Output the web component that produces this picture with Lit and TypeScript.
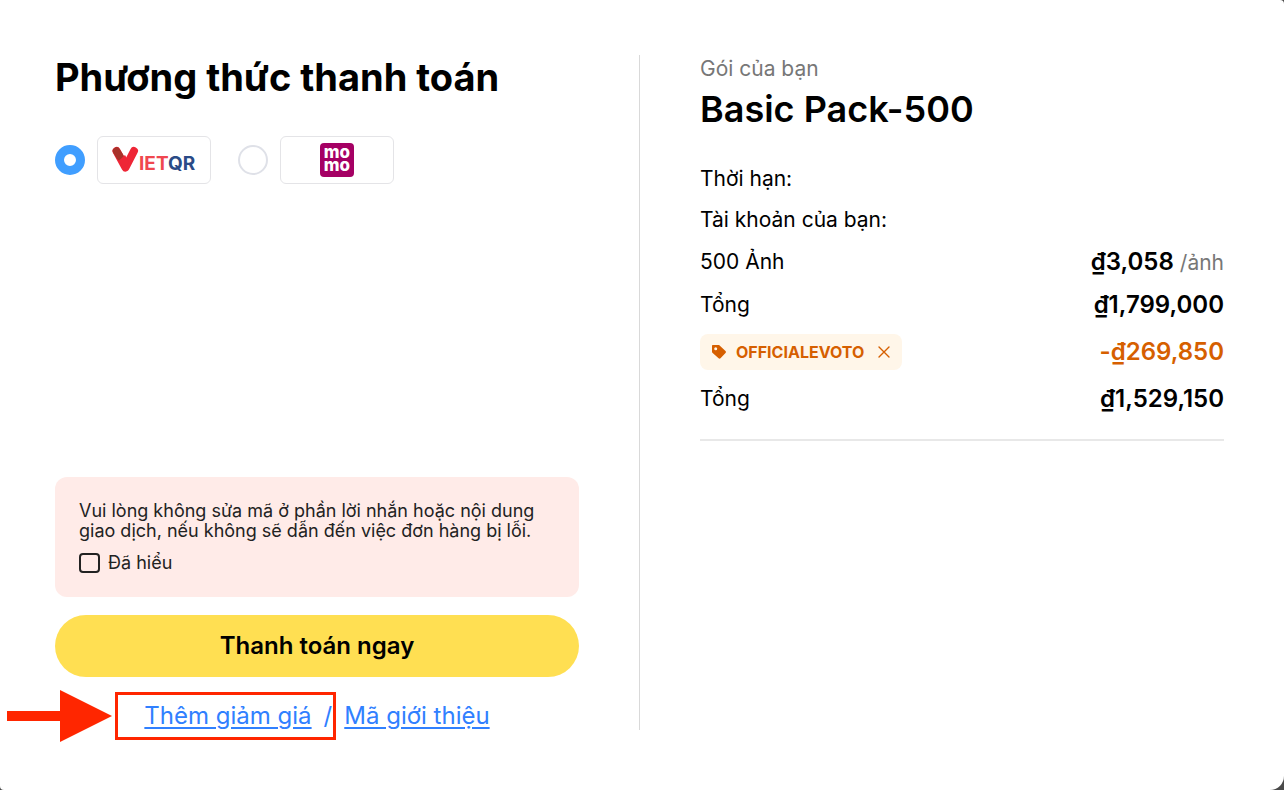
import { LitElement, html, css } from "lit";
import { customElement, state } from "lit/decorators.js";

const vietqrLogo = html`
  <svg class="vietqr" width="84" height="28" viewBox="0 0 84 28" role="img" aria-label="VietQR">
    <path d="M4.500 5 13.500 21.500 22 5" stroke="#ee2636" stroke-width="8" stroke-linecap="round" stroke-linejoin="round" />
    <path d="M4.500 5 8 10.500" stroke="#a8322a" stroke-width="7.400" stroke-linecap="round" />
    <path d="M7 14.500 13 9 17 16 12 22Z" fill="#ee2636" />
    <text x="27" y="24"><tspan class="red">IET</tspan><tspan class="blue">QR</tspan></text>
  </svg>
`;

const momoLogo = html`
  <svg class="momo" width="34" height="34" viewBox="0 0 34 34" role="img" aria-label="MoMo">
    <rect width="34" height="34" rx="4" fill="#a50064" />
    <text text-anchor="middle"><tspan x="17" y="15">mo</tspan><tspan x="17" y="28">mo</tspan></text>
  </svg>
`;

const tagIcon = html`
  <svg width="14" height="14" viewBox="0 0 14 14" aria-hidden="true">
    <path
      fill="#d65f00"
      fill-rule="evenodd"
      d="M1 0h5.6c.4 0 .7.1 1 .4l5.900 5.700c.6.6.6 1.300 0 1.900l-5 5.300c-.5.6-1.300.6-1.900 0L.4 7.700C.1 7.400 0 7.100 0 6.700V1C0 .4.4 0 1 0Zm2.700 2.200a1.500 1.500 0 1 0 0 3 1.500 1.500 0 0 0 0-3Z"
    />
  </svg>
`;

const closeIcon = html`
  <svg width="12" height="12" viewBox="0 0 12 12" aria-hidden="true">
    <path d="M1 1 11 11M11 1 1 11" stroke="#d65f00" stroke-width="1.400" stroke-linecap="round" fill="none" />
  </svg>
`;

@customElement("payment-form")
class PaymentForm extends LitElement {
  static styles = css`
    :host {
      display: flex;
      flex-direction: column;
      min-width: 0;
    }
    .title {
      margin: 0;
      font-size: 38px;
      line-height: 44px;
      font-weight: 700;
    }
    .methods {
      display: flex;
      gap: 27px;
      margin: 37px 0 0;
      padding: 0;
      border: 0;
    }
    .method {
      display: flex;
      align-items: center;
      gap: 12px;
      cursor: pointer;
    }
    .radio {
      appearance: none;
      box-sizing: border-box;
      width: 30px;
      height: 30px;
      margin: 0;
      border: 2px solid #dfe1e8;
      border-radius: 50%;
      background: #fff;
    }
    .radio:checked {
      border: 9px solid #409eff;
    }
    .logo {
      display: flex;
      align-items: center;
      justify-content: center;
      box-sizing: border-box;
      width: 114px;
      height: 48px;
      border: 1px solid #e4e4e7;
      border-radius: 6px;
    }
    .vietqr {
      fill: none;
    }
    .vietqr text {
      font: 700 19px "Inter", sans-serif;
    }
    .red {
      fill: #f0474f;
    }
    .blue {
      fill: #2a4b87;
    }
    .momo text {
      font: 800 17px "Inter", sans-serif;
      fill: #fff;
    }
    .notice {
      margin-top: auto;
      padding: 24px;
      border-radius: 12px;
      background: #ffebe8;
      color: #222;
      font-size: 18px;
      line-height: 20px;
    }
    .text {
      margin: 0 0 12px;
    }
    .agree {
      display: flex;
      align-items: center;
      gap: 8px;
    }
    .check {
      appearance: none;
      box-sizing: border-box;
      width: 21px;
      height: 20px;
      margin: 0;
      border: 2px solid #222;
      border-radius: 4px;
    }
    .check:checked {
      background: #222;
    }
    .pay {
      height: 62px;
      margin: 18px 0 25px;
      padding: 0 0 2px;
      border: 0;
      border-radius: 31px;
      background: #ffdf52;
      color: #000;
      font: 600 24px "Inter", sans-serif;
      cursor: pointer;
    }
    .links {
      display: flex;
      justify-content: center;
      gap: 12px;
      color: #3080ff;
      font-size: 24px;
      line-height: 28px;
    }
    .links a {
      color: inherit;
      text-underline-offset: 3px;
    }
    .marked {
      position: relative;
      display: flex;
      gap: 12px;
    }
    .frame {
      position: absolute;
      inset: -10px -4px;
      left: -29px;
      border: 3px solid #ff2600;
      pointer-events: none;
    }
    .arrow {
      position: absolute;
      right: 100%;
      top: 50%;
      margin-right: 32px;
      transform: translateY(-50%);
      pointer-events: none;
    }
  `;

  @state() private method = "vietqr";

  private option(id: string, logo: unknown) {
    return html`
      <label class="method">
        <input
          class="radio"
          type="radio"
          name="method"
          value=${id}
          .checked=${this.method === id}
          @change=${() => (this.method = id)}
        />
        <span class="logo">${logo}</span>
      </label>
    `;
  }

  render() {
    return html`
      <h1 class="title">Phương thức thanh toán</h1>
      <fieldset class="methods">
        ${this.option("vietqr", vietqrLogo)} ${this.option("momo", momoLogo)}
      </fieldset>
      <section class="notice">
        <p class="text">
          Vui lòng không sửa mã ở phần lời nhắn hoặc nội dung giao dịch, nếu không sẽ dẫn đến việc đơn hàng bị lỗi.
        </p>
        <label class="agree"><input class="check" type="checkbox" />Đã hiểu</label>
      </section>
      <button class="pay" type="button">Thanh toán ngay</button>
      <div class="links">
        <span class="marked">
          <a href="#discount">Thêm giảm giá</a><span>/</span>
          <span class="frame"></span>
          <svg class="arrow" width="106" height="52" viewBox="0 0 106 52" aria-hidden="true">
            <path d="M1 21H54V0L106 26 54 52V31H1Z" fill="#ff2600" />
          </svg>
        </span>
        <a href="#referral">Mã giới thiệu</a>
      </div>
    `;
  }
}

@customElement("order-summary")
class OrderSummary extends LitElement {
  static styles = css`
    :host {
      display: block;
      min-width: 0;
    }
    .caption {
      margin: 0;
      color: #777;
      font-size: 21px;
      line-height: 28px;
    }
    .name {
      margin: 4px 0 35px;
      font-size: 36px;
      line-height: 44px;
      font-weight: 600;
    }
    .rows {
      display: flex;
      flex-direction: column;
      gap: 15px;
      padding-bottom: 26px;
      border-bottom: 2px solid #e8e8e8;
      font-size: 21px;
      line-height: 26px;
    }
    .row {
      display: flex;
      align-items: center;
      justify-content: space-between;
    }
    .price {
      font-size: 24px;
      line-height: 28px;
      font-weight: 600;
    }
    .unit {
      color: #777;
      font-size: 21px;
      line-height: 20px;
      font-weight: 400;
    }
    .off {
      color: #d65f00;
    }
    .tag {
      display: flex;
      align-items: center;
      box-sizing: border-box;
      height: 36px;
      padding: 0 12px;
      border-radius: 8px;
      background: #fff6e9;
      color: #d65f00;
      font-size: 16px;
      font-weight: 700;
    }
    .code {
      margin: 0 14px 0 10px;
    }
    .remove {
      display: flex;
      padding: 0;
      border: 0;
      background: none;
      cursor: pointer;
    }
  `;

  @state() private coupon = true;

  render() {
    return html`
      <p class="caption">Gói của bạn</p>
      <h2 class="name">Basic Pack-500</h2>
      <div class="rows">
        <div class="row"><span>Thời hạn:</span></div>
        <div class="row"><span>Tài khoản của bạn:</span></div>
        <div class="row">
          <span>500 Ảnh</span><span class="price">₫3,058 <span class="unit">/ảnh</span></span>
        </div>
        <div class="row"><span>Tổng</span><span class="price">₫1,799,000</span></div>
        ${this.coupon
          ? html`<div class="row">
              <span class="tag">
                ${tagIcon}<span class="code">OFFICIALEVOTO</span>
                <button class="remove" type="button" aria-label="Xóa mã" @click=${() => (this.coupon = false)}>
                  ${closeIcon}
                </button>
              </span>
              <span class="price off">-₫269,850</span>
            </div>`
          : null}
        <div class="row">
          <span>Tổng</span><span class="price">${this.coupon ? "₫1,529,150" : "₫1,799,000"}</span>
        </div>
      </div>
    `;
  }
}

@customElement("app-root")
class AppRoot extends LitElement {
  static styles = css`
    :host {
      display: block;
      background: #4a4a4a;
      color: #000;
      font-family: "Inter", sans-serif;
    }
    .dialog {
      display: grid;
      grid-template-columns: minmax(0, 1fr) 1px minmax(0, 1fr);
      gap: 60px;
      box-sizing: border-box;
      min-height: 100vh;
      padding: 55px 60px 60px 55px;
      border-radius: 0 4px 14px 4px;
      background: #fff;
    }
    .divider {
      background: #d9d9d9;
    }
  `;

  render() {
    return html`
      <main class="dialog">
        <payment-form></payment-form>
        <div class="divider"></div>
        <order-summary></order-summary>
      </main>
    `;
  }
}
